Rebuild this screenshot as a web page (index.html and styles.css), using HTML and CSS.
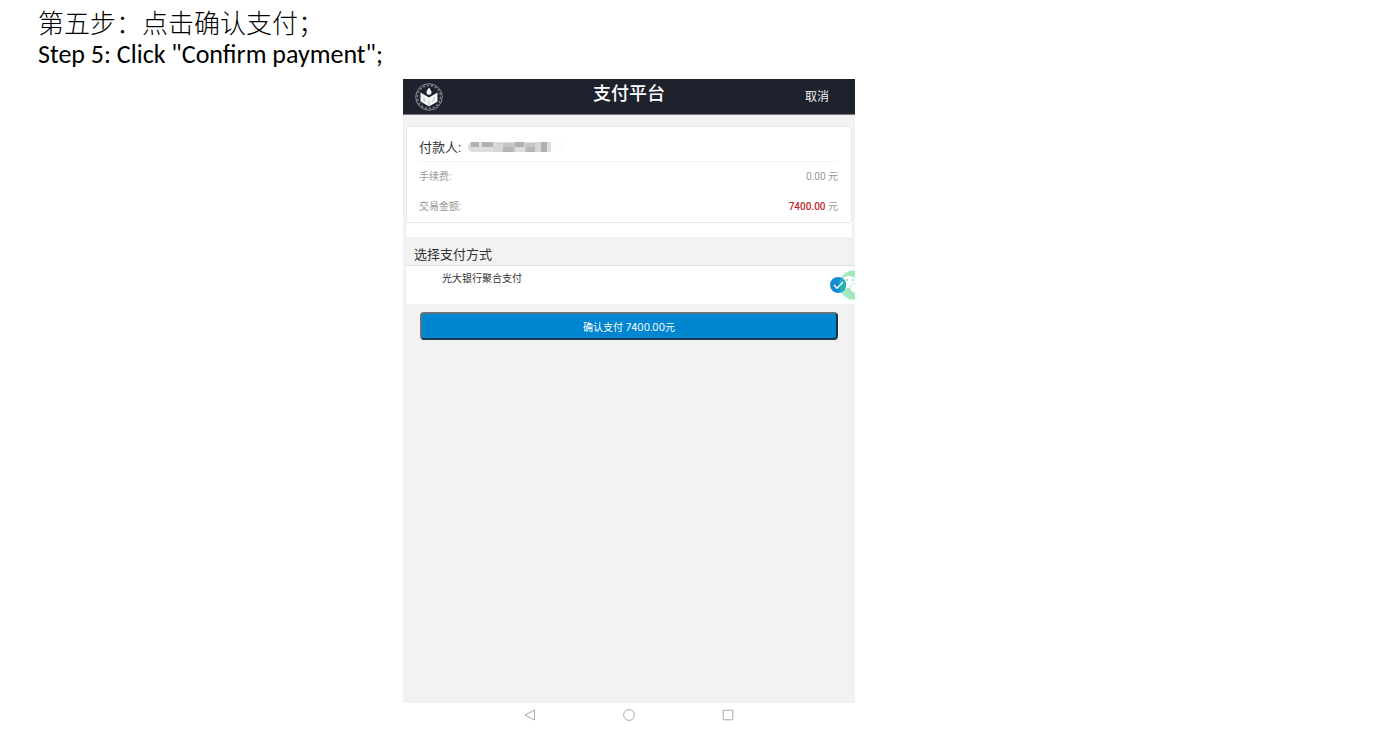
FILE: index.html
```
<!DOCTYPE html>
<html lang="zh-CN">
<head>
    <meta charset="UTF-8">
    <meta name="viewport" content="width=device-width, initial-scale=1.0">
    <title>支付平台</title>
    <link rel="stylesheet" href="styles.css">
</head>
<body>
    <main class="guide">
        <div class="step">
            <p class="step-zh">第五步：点击确认支付；</p>
            <p class="step-en" lang="en">Step 5: Click "Confirm payment";</p>
        </div>

        <div class="phone">
            <header class="top-bar">
                <svg class="logo" viewBox="0 0 28 28" aria-hidden="true">
                    <circle cx="14" cy="14" r="13.3" fill="none" stroke="#a4a7b0" stroke-width="0.8"/>
                    <circle cx="14" cy="14" r="11.6" fill="none" stroke="#70747f" stroke-width="1.8" stroke-dasharray="2.4 1.6"/>
                    <path d="M14 4.8c1.5 2 2.5 3 2.5 4.4a2.5 2.5 0 0 1-5 0c0-1.4 1-2.4 2.5-4.4z" fill="#fff"/>
                    <path d="M5.5 9.5l8.5 5 8.5-5v9L14 23.5l-8.5-5z" fill="#f4f5f7"/>
                    <path d="M9 14.5v3l2 1.2M19 14.5v3l-2 1.2M14 18v5" fill="none" stroke="#8b8f99" stroke-width="0.6"/>
                </svg>
                <h1>支付平台</h1>
                <button type="button" class="cancel">取消</button>
            </header>

            <form class="content">
                <section class="order">
                    <div class="card">
                        <div class="payer">
                            <span>付款人:</span>
                            <svg class="masked" viewBox="0 0 96 12" role="img" aria-label="已隐藏">
                                <path d="M4 1h80v10H4l-3-3V4z" fill="#dedede"/>
                                <path d="M4 1h8v5H4zM15 1h11v5H15zM48 1h9v5h-9zM74 1h6v10h-6z" fill="#b0b0b0"/>
                                <path d="M26 2h10v9H26zM68 1h6v10h-6z" fill="#d6d6d6"/>
                                <path d="M36 2h12v9H36zM58 2h10v9H58z" fill="#c5c5c5"/>
                                <path d="M36 6h10v5H36zM60 6h8v5h-8z" fill="#b5b5b5"/>
                                <path d="M84 1h12v10H84z" fill="#fdfdfd"/>
                            </svg>
                        </div>
                        <div class="row">
                            <span>手续费:</span>
                            <span>0.00 元</span>
                        </div>
                        <div class="row">
                            <span>交易金额:</span>
                            <span><strong>7400.00</strong> 元</span>
                        </div>
                    </div>
                </section>

                <h2>选择支付方式</h2>
                <div class="method">
                    <label for="cebPay">光大银行聚合支付</label>
                    <input type="radio" id="cebPay" name="method" checked>
                    <svg class="chat" viewBox="0 0 18 34" aria-hidden="true">
                        <circle cx="17" cy="17" r="16" fill="#f0faf4"/>
                        <circle cx="17" cy="17" r="14.5" fill="#a0e8be"/>
                        <ellipse cx="12" cy="14" rx="8" ry="6" fill="#fff"/>
                        <ellipse cx="19" cy="20" rx="6" ry="5" fill="#fff" stroke="#b9efcf"/>
                        <path d="M7 17l-1 5 6-3z" fill="#fff"/>
                        <circle cx="10" cy="12" r="1" fill="#7cd6a2"/>
                        <circle cx="16" cy="12" r="1" fill="#7cd6a2"/>
                    </svg>
                    <svg class="tick" viewBox="0 0 16 16" aria-hidden="true">
                        <circle cx="8" cy="8" r="8" fill="#168bd5"/>
                        <path d="M11 .6a8 8 0 0 1 0 14.8A16 16 0 0 1 11 .6z" fill="#25aeb5"/>
                        <path d="M4 8l3 3.2L13 5" fill="none" stroke="#e8f6fc" stroke-width="1.6"/>
                    </svg>
                </div>

                <button type="submit" class="confirm">确认支付 7400.00元</button>
            </form>

            <nav class="system-bar">
                <button type="button" aria-label="返回"><svg viewBox="0 0 12 12"><path d="M10.5 1v10L1 6z"/></svg></button>
                <button type="button" aria-label="主页"><svg viewBox="0 0 12 12"><circle cx="6" cy="6" r="5.4"/></svg></button>
                <button type="button" aria-label="最近任务"><svg viewBox="0 0 12 12"><path d="M1.2 1.2h9.6v9.6H1.2z"/></svg></button>
            </nav>
        </div>
    </main>
</body>
</html>
```

FILE: styles.css
```
* {
    box-sizing: border-box;
}
body {
    font-family: Roboto, "Noto Sans CJK SC", sans-serif;
    margin: 0;
    background: #fff;
    color: #333;
}
h1, h2, p {
    margin: 0;
    font-weight: normal;
}
button {
    font-family: inherit;
    cursor: pointer;
}
.guide {
    max-width: 1220px;
    padding: 6px 0 12px 38px;
}
.step {
    margin-bottom: 9px;
    color: #000;
    font-size: 26px;
    line-height: 32px;
}
.step-zh {
    font-family: "Noto Sans CJK SC", sans-serif;
    font-weight: 300;
}
.step-en {
    font-family: Carlito, Lato, sans-serif;
}
.phone {
    max-width: 452px;
    margin: 0 auto;
}
.top-bar {
    display: grid;
    grid-template-columns: 1fr auto 1fr;
    align-items: center;
    height: 36px;
    padding: 0 26px 0 12px;
    background: #1e222d;
    border-bottom: 1px solid #777a82;
    color: #fff;
}
.logo {
    width: 28px;
    height: 28px;
}
.top-bar h1 {
    padding: 0 0 6px 14px;
    font-size: 18px;
    font-weight: 500;
    line-height: 20px;
}
.cancel {
    justify-self: end;
    padding: 0 0 2px;
    border: none;
    background: none;
    color: #f0f0f0;
    font-size: 12px;
}
.content {
    min-height: 588px;
    padding-top: 11px;
    background: #f2f2f2;
}
.order {
    margin: 0 3px;
    padding-bottom: 14px;
    background: #fff;
}
.card {
    padding: 5px 13px 4px 12px;
    border: 1px solid #e6e6e6;
    border-radius: 3px;
}
.payer {
    display: flex;
    align-items: center;
    gap: 6px;
    height: 30px;
    border-bottom: 1px solid #f4f4f4;
    font-size: 13px;
}
.masked {
    width: 96px;
    height: 12px;
}
.row {
    display: flex;
    justify-content: space-between;
    align-items: center;
    height: 26px;
    color: #999;
    font-size: 10px;
}
.row + .row {
    margin-top: 4px;
}
.row strong {
    color: #c4262e;
    font-weight: 500;
}
.content h2 {
    padding: 8px 11px 0;
    font-size: 13px;
    line-height: 20px;
}
.method {
    position: relative;
    height: 39px;
    margin-left: 3px;
    padding: 5px 36px;
    border-top: 1px solid #ddd;
    background: #fff;
    font-size: 10px;
    line-height: 16px;
}
.method label {
    display: block;
}
.method input {
    position: absolute;
    top: 11px;
    right: 9px;
    width: 16px;
    height: 16px;
    margin: 0;
    opacity: 0;
}
.tick {
    position: absolute;
    top: 11px;
    right: 9px;
    width: 16px;
    height: 16px;
    pointer-events: none;
}
.chat {
    position: absolute;
    top: 2px;
    right: 0;
    width: 18px;
    height: 34px;
}
.confirm {
    display: block;
    width: calc(100% - 34px);
    height: 28px;
    margin: 8px 17px 0;
    padding: 0;
    background: #0085d0;
    border: 2px solid;
    border-color: #66737b #17384c #17384c #66737b;
    border-radius: 4px;
    color: #fff;
    font-family: Inter, "Noto Sans CJK SC", sans-serif;
    font-size: 10px;
}
.system-bar {
    display: flex;
    justify-content: center;
    gap: 87px;
    padding-top: 6px;
}
.system-bar button {
    width: 12px;
    height: 12px;
    padding: 0;
    border: none;
    background: none;
}
.system-bar svg {
    display: block;
    fill: none;
    stroke: #aaa;
}
```
